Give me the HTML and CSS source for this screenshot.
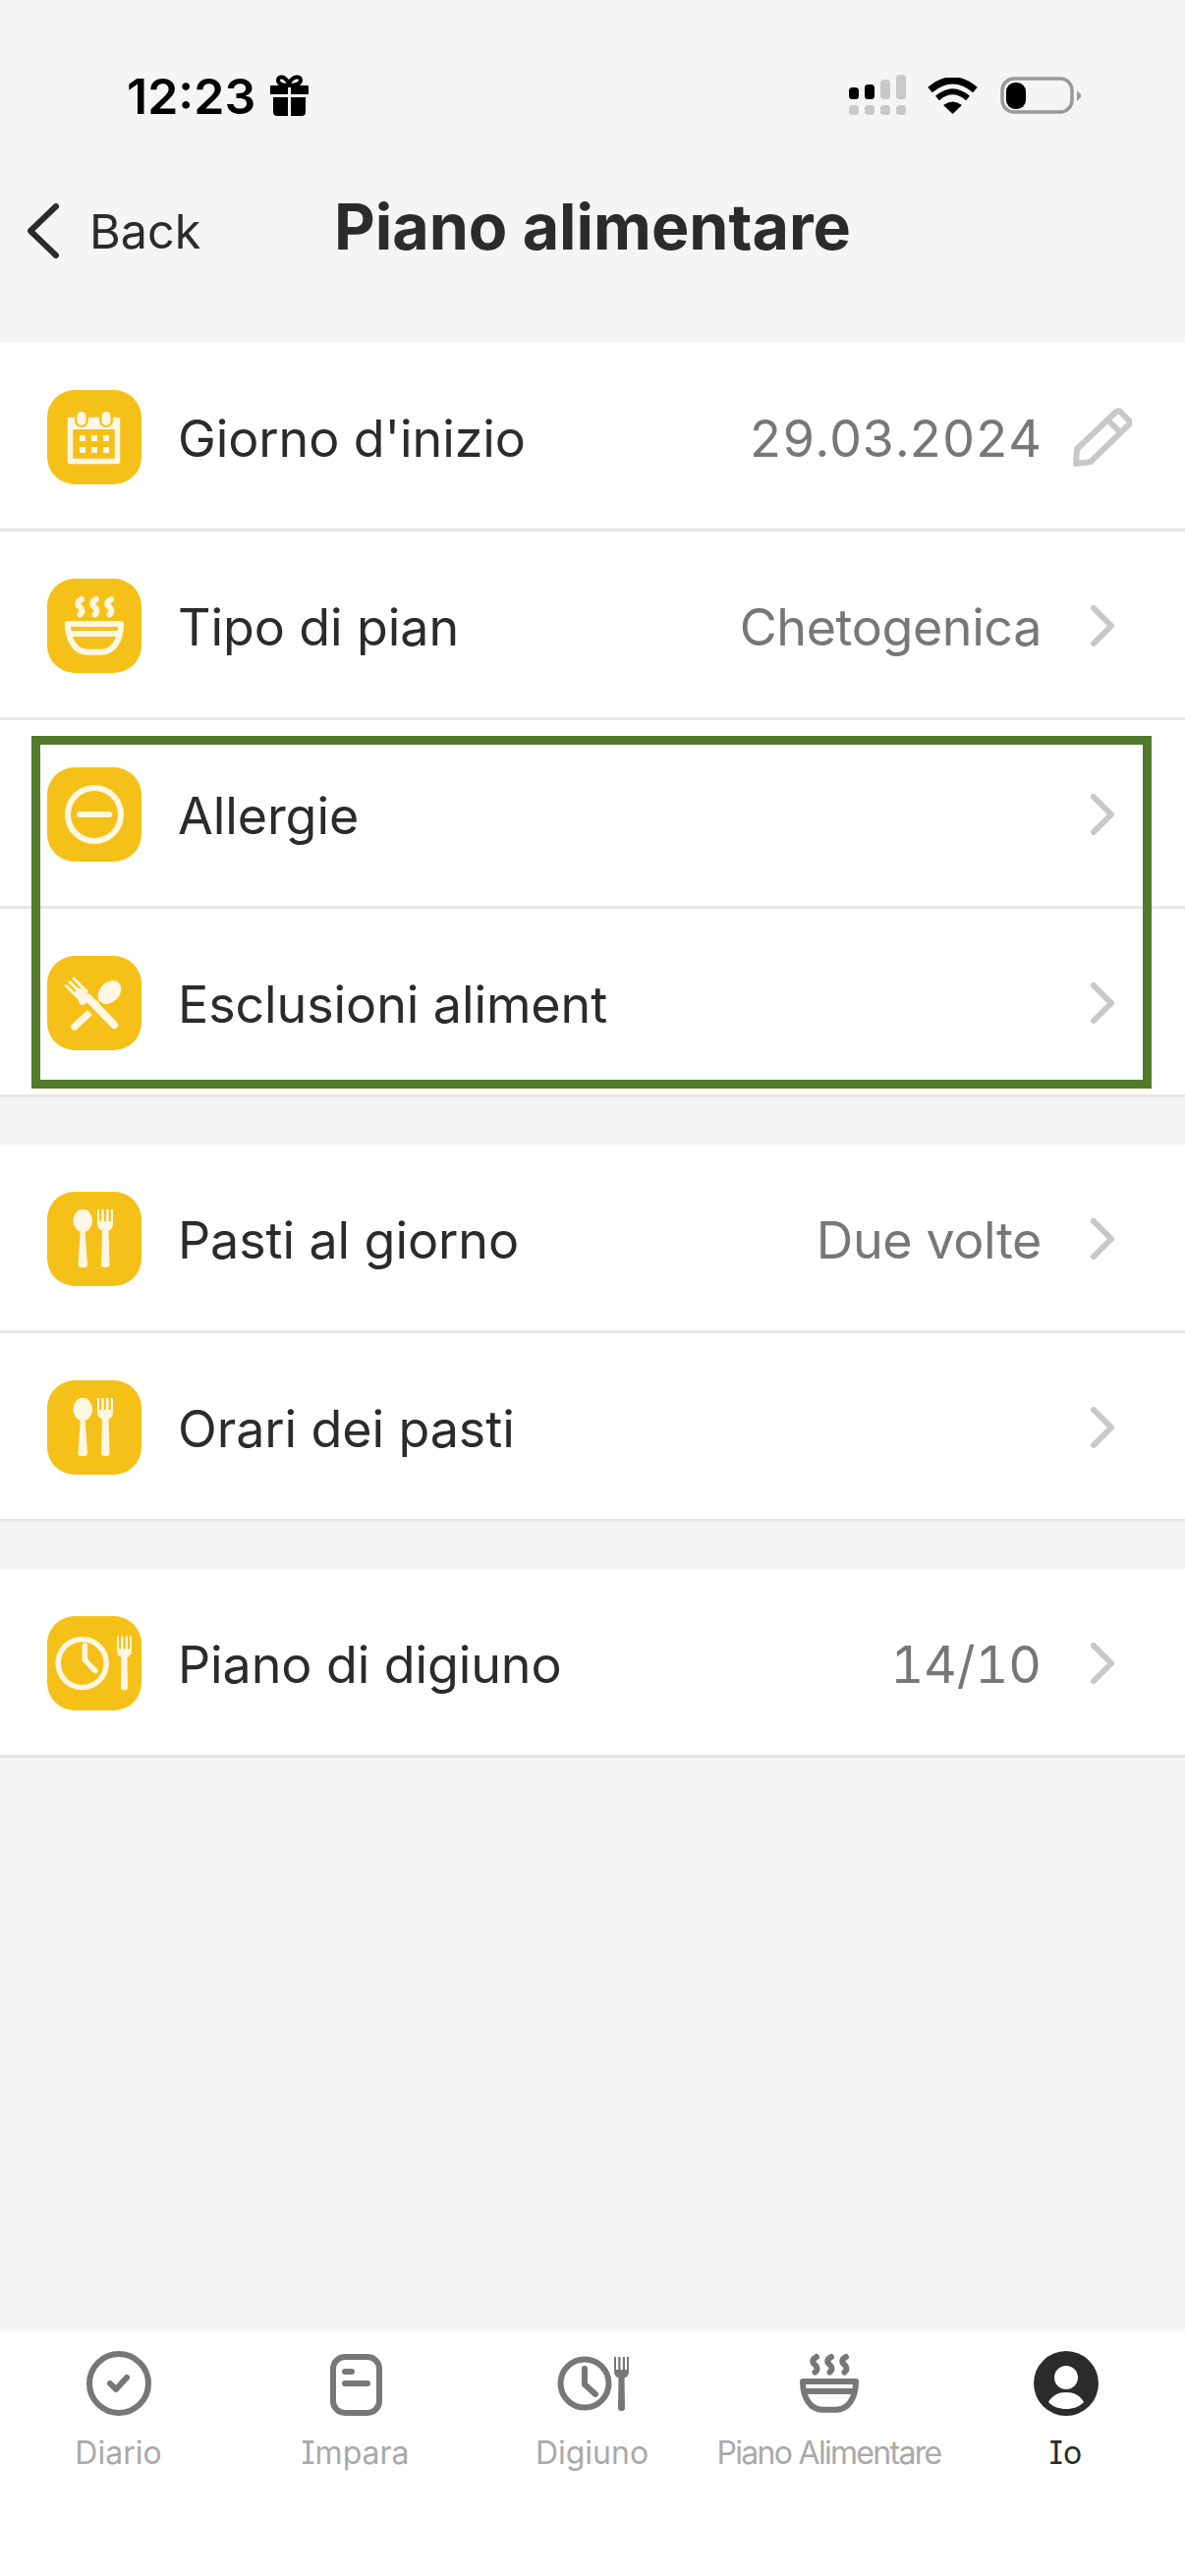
FILE: index.html
```html
<!DOCTYPE html>
<html lang="it">
<head>
  <meta charset="UTF-8" />
  <meta name="viewport" content="width=device-width, initial-scale=1.0"/>
  <title>Piano alimentare</title>
  <link rel="stylesheet" href="styles.css">
</head>
<body>

  <!-- shared icons -->
  <svg class="defs" width="0" height="0">
    <symbol id="chevron" viewBox="0 0 24 42">
      <path d="M3 3 L21 21 L3 39" fill="none" stroke="currentColor" stroke-width="6" stroke-linecap="round" stroke-linejoin="round"/>
    </symbol>
    <symbol id="bowl" viewBox="0 0 96 96">
      <g fill="none" stroke="currentColor" stroke-width="6" stroke-linecap="round" stroke-linejoin="round">
        <path d="M21 46 H75 C75 63 67 74.700 55 74.700 H41 C29 74.700 21 63 21 46 Z"/>
        <path d="M23 56 H73"/>
        <path d="M35 21 C31 23 30 26 33 28.500 C36 31 36.500 34 33.500 36.500"/>
        <path d="M50 21 C46 23 45 26 48 28.500 C51 31 51.500 34 48.500 36.500"/>
        <path d="M65 21 C61 23 60 26 63 28.500 C66 31 66.500 34 63.500 36.500"/>
      </g>
    </symbol>
    <symbol id="cutlery" viewBox="0 0 96 96">
      <g fill="currentColor">
        <ellipse cx="36.300" cy="29.500" rx="9.800" ry="11.800"/>
        <path d="M34 38 H38.500 L41 74 Q41 77 38 77 H34.500 Q31.500 77 31.500 74 Z"/>
        <path d="M51 18 H53 V30 H55.200 V18 H57.800 V30 H60 V18 H62.600 V30 H64.800 V18 H67 V32 Q67 38 62.500 39.500 L63.500 74 Q63.500 77 60.500 77 H58 Q55 77 55 74 L56 39.500 Q51 38 51 32 Z"/>
      </g>
    </symbol>
    <symbol id="fork" viewBox="0 0 15 55">
      <path fill="currentColor" d="M0 0 H2 V13 H4.200 V0 H6.500 V13 H8.800 V0 H11 V13 H13 V0 H15 V14 Q15 20 10.500 21.500 L11 52 Q11 55 7.500 55 Q4 55 4 52 L4.500 21.500 Q0 20 0 14 Z"/>
    </symbol>
  </svg>

  <div class="page">

    <div class="status">
      <div class="status-left">
        <span class="time">12:23</span>
        <svg class="gift" width="39" height="42" viewBox="0 0 39 42">
          <path fill="#000" d="M1 11 H18 V20 H0 V12 Q0 11 1 11 Z M21 11 H38 Q39 11 39 12 V20 H21 Z M3 23 H18 V42 H7 Q3 42 3 38 Z M21 23 H36 V38 Q36 42 32 42 H21 Z"/>
          <path fill="none" stroke="#000" stroke-width="4" d="M19 11 C12 11 8 9 8 5.500 C8 1 15 1 19 9 C23 1 31 1 31 5.500 C31 9 26 11 19 11 Z"/>
        </svg>
      </div>
      <div class="status-right">
        <svg width="58" height="41" viewBox="0 0 58 41">
          <rect x="0" y="13" width="10" height="12" rx="3.500" fill="#000"/>
          <rect x="16" y="10" width="10" height="15" rx="3.500" fill="#000"/>
          <rect x="32" y="5" width="10" height="20" rx="3.500" fill="#c8c8c8"/>
          <rect x="48" y="0" width="10" height="25" rx="3.500" fill="#c8c8c8"/>
          <rect x="0" y="31" width="10" height="10" rx="3.500" fill="#c8c8c8"/>
          <rect x="16" y="31" width="10" height="10" rx="3.500" fill="#c8c8c8"/>
          <rect x="32" y="31" width="10" height="10" rx="3.500" fill="#c8c8c8"/>
          <rect x="48" y="31" width="10" height="10" rx="3.500" fill="#c8c8c8"/>
        </svg>
        <svg class="wifi" width="51" height="37" viewBox="0 0 51 37">
          <path fill="#000" d="M25.500 37 L16 28 Q25.500 21 35 28 Z"/>
          <path fill="none" stroke="#000" stroke-width="6" d="M10 21 Q25.500 7.500 41 21"/>
          <path fill="none" stroke="#000" stroke-width="7" d="M2.500 12.500 Q25.500 -7 48.500 12.500"/>
        </svg>
        <svg class="battery" width="82" height="38" viewBox="0 0 82 38">
          <rect x="2" y="2" width="71" height="34" rx="12" fill="none" stroke="#999" stroke-width="3.500"/>
          <rect x="6" y="6" width="20" height="27" rx="9" fill="#000"/>
          <path d="M78 14 L82 18 V21 L78 25 Z" fill="#999"/>
        </svg>
      </div>
    </div>

    <div class="nav">
      <div class="back">
        <svg width="32" height="56" viewBox="0 0 32 56">
          <path d="M29 3 L3 28 L29 53" fill="none" stroke="#2b2b2b" stroke-width="6" stroke-linecap="round" stroke-linejoin="round"/>
        </svg>
        <span>Back</span>
      </div>
      <h1>Piano alimentare</h1>
    </div>

    <div class="group">
      <div class="row">
        <span class="tile">
          <svg viewBox="0 0 96 96">
            <rect x="23.500" y="30.500" width="48" height="42" fill="none" stroke="currentColor" stroke-width="5.500" stroke-linejoin="round"/>
            <rect x="21" y="28" width="53" height="12" fill="currentColor"/>
            <rect x="28" y="20" width="14" height="18" rx="7" fill="#f5c118"/>
            <rect x="53" y="20" width="14" height="18" rx="7" fill="#f5c118"/>
            <rect x="30.500" y="22" width="9" height="14" rx="4.500" fill="currentColor"/>
            <rect x="55.500" y="22" width="9" height="14" rx="4.500" fill="currentColor"/>
            <g fill="currentColor">
              <rect x="33" y="46" width="6" height="6"/><rect x="45" y="46" width="6" height="6"/><rect x="57" y="46" width="6" height="6"/>
              <rect x="33" y="58" width="6" height="6"/><rect x="45" y="58" width="6" height="6"/><rect x="57" y="58" width="6" height="6"/>
            </g>
          </svg>
        </span>
        <span class="label">Giorno d'inizio</span>
        <span class="value num">29.03.2024</span>
        <svg class="pencil" width="60" height="60" viewBox="0 0 60 60">
          <path d="M3 57 L4 42 L44 4 Q46 2.500 48 4 L57 13 Q58.500 15 57 17 L18 55 Z M36 13 L48 25" fill="none" stroke="#c8c8c8" stroke-width="6" stroke-linejoin="round"/>
        </svg>
      </div>
      <div class="row">
        <span class="tile"><svg viewBox="0 0 96 96"><use href="#bowl"/></svg></span>
        <span class="label">Tipo di pian</span>
        <span class="value">Chetogenica</span>
        <svg class="chev"><use href="#chevron"/></svg>
      </div>
      <div class="highlighted">
        <div class="row">
          <span class="tile">
            <svg viewBox="0 0 96 96">
              <circle cx="48" cy="48" r="27" fill="none" stroke="currentColor" stroke-width="6"/>
              <path d="M33 48 H63" stroke="currentColor" stroke-width="6" stroke-linecap="round"/>
            </svg>
          </span>
          <span class="label">Allergie</span>
          <svg class="chev"><use href="#chevron"/></svg>
        </div>
        <div class="row">
          <span class="tile">
            <svg viewBox="0 0 96 96">
              <g fill="currentColor">
                <ellipse cx="63.500" cy="37" rx="13.500" ry="10" transform="rotate(-45 63.500 37)"/>
                <path d="M51 45 L54 50 L49 49 Z"/>
                <path d="M41 55 L46 60 L30 75 Q27.500 77 25 74.500 Q23 72 25 70 Z"/>
              </g>
              <g fill="none" stroke="currentColor" stroke-linecap="round">
                <path d="M42 43 L68 70" stroke-width="8"/>
                <path d="M19.500 30.500 L33 44 M23 26.500 L36.500 40 M27 23 L40.500 36.500" stroke-width="3"/>
                <path d="M33 37 L39 43 L36 46" stroke-width="8"/>
              </g>
            </svg>
          </span>
          <span class="label">Esclusioni aliment</span>
          <svg class="chev"><use href="#chevron"/></svg>
        </div>
        <div class="marker"></div>
      </div>
    </div>

    <div class="group">
      <div class="row">
        <span class="tile"><svg viewBox="0 0 96 96"><use href="#cutlery"/></svg></span>
        <span class="label">Pasti al giorno</span>
        <span class="value">Due volte</span>
        <svg class="chev"><use href="#chevron"/></svg>
      </div>
      <div class="row">
        <span class="tile"><svg viewBox="0 0 96 96"><use href="#cutlery"/></svg></span>
        <span class="label">Orari dei pasti</span>
        <svg class="chev"><use href="#chevron"/></svg>
      </div>
    </div>

    <div class="group">
      <div class="row">
        <span class="tile">
          <svg viewBox="0 0 96 96">
            <circle cx="35.700" cy="48" r="24.500" fill="none" stroke="currentColor" stroke-width="5.500"/>
            <path d="M38.300 30 V44.700 L49 55.700" fill="none" stroke="currentColor" stroke-width="5.500" stroke-linecap="round" stroke-linejoin="round"/>
            <use href="#fork" x="71" y="19" width="15" height="58"/>
          </svg>
        </span>
        <span class="label">Piano di digiuno</span>
        <span class="value num">14/10</span>
        <svg class="chev"><use href="#chevron"/></svg>
      </div>
    </div>

    <div class="tabs">
      <div class="tab">
        <svg viewBox="0 0 66 66">
          <circle cx="33" cy="33" r="30" fill="none" stroke="currentColor" stroke-width="6"/>
          <path d="M24 33 L30 39 L41 27" fill="none" stroke="currentColor" stroke-width="6" stroke-linecap="round" stroke-linejoin="round"/>
        </svg>
        <span>Diario</span>
      </div>
      <div class="tab">
        <svg viewBox="0 0 66 66">
          <rect x="10" y="6" width="47" height="57" rx="12" fill="none" stroke="currentColor" stroke-width="6"/>
          <path d="M22 21 H29 M22 33 H45" stroke="currentColor" stroke-width="6" stroke-linecap="round"/>
        </svg>
        <span>Impara</span>
      </div>
      <div class="tab">
        <svg viewBox="0 0 74 66">
          <circle cx="29" cy="33" r="24.500" fill="none" stroke="currentColor" stroke-width="6"/>
          <path d="M29 18 V34 L40 44" fill="none" stroke="currentColor" stroke-width="6" stroke-linecap="round" stroke-linejoin="round"/>
          <use href="#fork" x="59" y="6" width="15" height="55"/>
        </svg>
        <span>Digiuno</span>
      </div>
      <div class="tab">
        <svg viewBox="15 15 66 66"><use href="#bowl" x="0" y="0" width="96" height="96"/></svg>
        <span class="tight">Piano Alimentare</span>
      </div>
      <div class="tab active">
        <svg viewBox="0 0 66 66">
          <circle cx="33" cy="33" r="33" fill="#2b2b2b"/>
          <circle cx="33" cy="27" r="12" fill="#fff"/>
          <path d="M15 52 C19 45 25 42 33 42 C41 42 47 45 51 52 C46 57 40 59 33 59 C26 59 20 57 15 52 Z" fill="#fff"/>
        </svg>
        <span>Io</span>
      </div>
    </div>

  </div>

</body>
</html>
```

FILE: styles.css
```css
* {
  box-sizing: border-box;
}

body {
  margin: 0;
  background-color: #f5f5f5;
  font-family: Inter, "Noto Sans", sans-serif;
  font-feature-settings: "cv08";
  color: #2b2b2b;
}

.defs {
  display: block;
  height: 0;
}

.page {
  height: 2622px;
  display: flex;
  flex-direction: column;
  overflow: hidden;
}

/* Status bar */
.status {
  height: 122px;
  padding: 76px 106px 0 129px;
  display: flex;
  justify-content: space-between;
  align-items: flex-start;
}

.status-left {
  display: flex;
  align-items: flex-start;
  gap: 15px;
}

.time {
  font-size: 50px;
  line-height: 44px;
  font-weight: 600;
  color: #000;
}

.status-right {
  display: flex;
  align-items: flex-start;
  gap: 22px;
}

.status-right svg {
  display: block;
}

.wifi {
  margin-top: 3px;
}

.battery {
  margin-top: 2px;
  margin-left: 1px;
}

/* Nav */
.nav {
  height: 227px;
  padding: 85px 0 0 28px;
  position: relative;
}

.back {
  display: flex;
  align-items: center;
  gap: 31px;
  font-size: 48.500px;
  height: 56px;
}

.back svg {
  display: block;
}

.nav h1 {
  position: absolute;
  left: 0;
  right: 0;
  top: 77px;
  margin: 0;
  text-align: center;
  font-size: 64.500px;
  line-height: 64px;
  font-weight: 700;
}

/* Settings rows */
.group {
  background: white;
  margin-bottom: 48px;
}

.row {
  height: 192px;
  padding: 48px 72px 0 48px;
  display: flex;
  align-items: flex-start;
  border-bottom: 3px solid #e6e6e6;
}

.tile {
  width: 96px;
  height: 96px;
  flex: none;
  border-radius: 28px;
  background-color: #f5c118;
  color: #fff6e3;
}

.tile svg {
  display: block;
  width: 96px;
  height: 96px;
}

.label {
  margin: 2px 0 0 37px;
  font-size: 52px;
  line-height: 96px;
  letter-spacing: -0.100px;
}

.value {
  margin: 2px 0 0 auto;
  font-size: 52px;
  line-height: 96px;
  letter-spacing: -0.400px;
  color: #777;
}

.value.num {
  font-feature-settings: "cv08", "tnum";
  letter-spacing: 0;
}

.chev {
  width: 24px;
  height: 42px;
  margin: 27px 0 0 50px;
  color: #c8c8c8;
  flex: none;
}

.label + .chev {
  margin-left: auto;
}

.pencil {
  margin: 18px -18px 0 32px;
  flex: none;
}

.highlighted {
  position: relative;
}

.marker {
  position: absolute;
  top: 16px;
  bottom: 9px;
  left: 32px;
  right: 34px;
  border: 9px solid #517a2b;
}

/* Tab bar */
.tabs {
  margin-top: auto;
  height: 249px;
  padding: 20px 1px 0 0;
  background: white;
  display: grid;
  grid-template-columns: repeat(5, 1fr);
}

.tab {
  display: flex;
  flex-direction: column;
  align-items: center;
  font-size: 32px;
  color: #a9a9a9;
}

.tab svg {
  display: block;
  height: 66px;
  color: #777;
}

.tab span {
  margin-top: 16px;
  line-height: 44px;
  white-space: nowrap;
}

.tab .tight {
  letter-spacing: -1.700px;
}

.tab.active {
  color: #2b2b2b;
}
```
